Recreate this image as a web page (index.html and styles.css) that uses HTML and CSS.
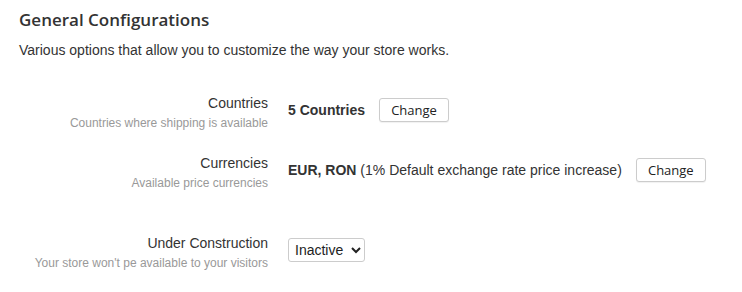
FILE: index.html
```html
<!DOCTYPE html>
<html lang="en">
<head>
  <meta charset="UTF-8" />
  <meta name="viewport" content="width=device-width, initial-scale=1.0" />
  <title>General Configurations</title>
  <link rel="stylesheet" href="styles.css">
</head>
<body>
  <div class="settings">
    <h2 class="settings__title">General Configurations</h2>
    <p class="settings__intro">Various options that allow you to customize the way your store works.</p>

    <div class="settings__rows">
      <div class="setting">
        <div class="setting__label">
          <div class="setting__name">Countries</div>
          <div class="setting__desc">Countries where shipping is available</div>
        </div>
        <div class="setting__value">
          <span><strong>5 Countries</strong></span>
          <button class="button">Change</button>
        </div>
      </div>

      <div class="setting">
        <div class="setting__label">
          <div class="setting__name">Currencies</div>
          <div class="setting__desc">Available price currencies</div>
        </div>
        <div class="setting__value">
          <span><strong>EUR, RON</strong> (1% Default exchange rate price increase)</span>
          <button class="button">Change</button>
        </div>
      </div>

      <div class="setting setting--spaced">
        <div class="setting__label">
          <div class="setting__name">Under Construction</div>
          <div class="setting__desc">Your store won't pe available to your visitors</div>
        </div>
        <div class="setting__value">
          <select class="select">
            <option>Inactive</option>
            <option>Active</option>
          </select>
        </div>
      </div>
    </div>
  </div>
</body>
</html>
```

FILE: styles.css
```css
:root {
  --text: #333;
  --muted: #999;
  --border: #ccc;
}

body {
  margin: 0;
  font-family: 'Liberation Sans', Arial, sans-serif;
  font-size: 14px;
  line-height: 20px;
  color: var(--text);
  background: #fff;
}

.settings {
  padding: 8px 19px;
}

.settings__title {
  margin: 0;
  font-family: 'Open Sans', sans-serif;
  font-size: 17px;
  font-weight: 600;
  line-height: 24px;
  color: #333;
}

.settings__intro {
  margin: 8px 0 0;
}

.settings__rows {
  margin-top: 33px;
  display: flex;
  flex-direction: column;
  gap: 22px;
}

.setting {
  display: grid;
  grid-template-columns: 249px 1fr;
  column-gap: 20px;
}
.setting--spaced {
  margin-top: 20px;
}

.setting__label {
  text-align: right;
}
.setting__desc {
  font-size: 12px;
  line-height: 16px;
  margin-top: 2px;
  color: var(--muted);
}

.setting__value {
  display: flex;
  align-items: center;
  gap: 14px;
  padding-top: 5px;
  align-self: start;
}

.button {
  font-family: 'Open Sans', sans-serif;
  font-size: 13px;
  color: #222;
  background: #fff;
  border: 1px solid var(--border);
  border-radius: 3px;
  box-shadow: 0 1px 1px rgba(0,0,0,0.06);
  width: 70px;
  height: 24px;
  padding: 0;
  cursor: pointer;
}

.select {
  font-family: 'Liberation Sans', Arial, sans-serif;
  font-size: 14px;
  color: #222;
  background: #fff;
  border: 1px solid var(--border);
  border-radius: 3px;
  height: 24px;
  width: 77px;
  padding: 0 2px;
}
```
